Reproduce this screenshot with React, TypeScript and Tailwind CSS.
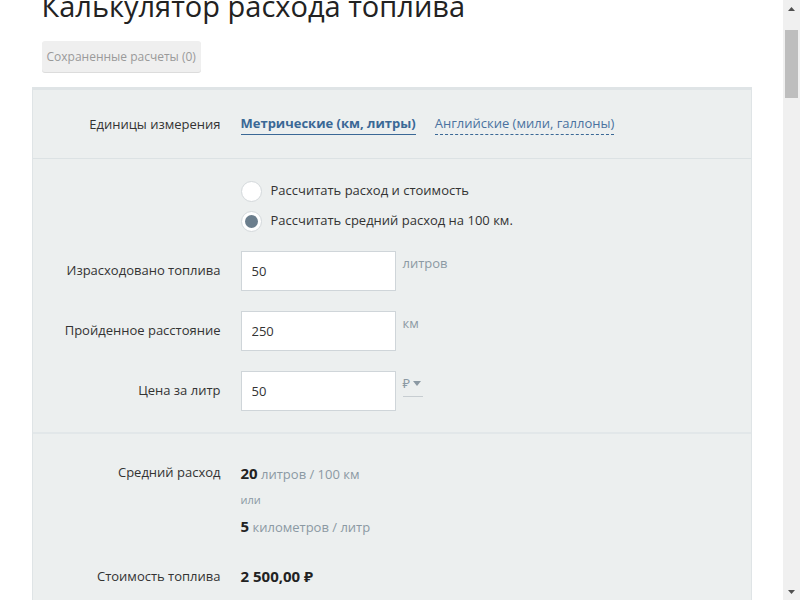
import { useLayoutEffect, useRef } from "react";

const font = { fontFamily: '"Open Sans", "Noto Sans", sans-serif' };

function Label({ children }: { children: React.ReactNode }) {
  return <div className="w-[188px] shrink-0 text-right text-[13px] text-[#333]">{children}</div>;
}

function Radio({ checked, label }: { checked?: boolean; label: string }) {
  return (
    <label className="flex h-[30px] items-center gap-[9px] text-[13px] text-[#333]">
      <span className="flex h-[21px] w-[21px] items-center justify-center rounded-full border border-[#d3d8db] bg-white">
        {checked && <span className="h-[13px] w-[13px] rounded-full bg-[#6b7e8d]" />}
      </span>
      {label}
    </label>
  );
}

function Field({ label, value, unit, currency }: { label: string; value: string; unit?: string; currency?: boolean }) {
  return (
    <div className="flex items-center gap-5">
      <Label>{label}</Label>
      <input
        defaultValue={value}
        className="h-[40px] w-[155px] border border-[#cfd5d9] bg-white px-[10px] text-[13px] text-[#333] outline-none"
      />
      <div className="-ml-[13px] self-start pt-[3px] text-[13px] text-[#8b99a3]">
        {unit}
        {currency && (
          <span className="flex items-center gap-[3px] border-b border-[#c7cdd1] pb-[2px] pr-[2px]">
            ₽
            <svg width="8" height="5" viewBox="0 0 8 5">
              <path d="M0 0h8L4 5z" fill="#8b99a3" />
            </svg>
          </span>
        )}
      </div>
    </div>
  );
}

// the page is scrolled; browser scrollbar is drawn by hand
function Scrollbar() {
  return (
    <div className="flex h-screen w-[17px] shrink-0 flex-col bg-[#f0f0f0]">
      <div className="flex h-[17px] items-center justify-center">
        <svg width="7" height="4" viewBox="0 0 7 4">
          <path d="M0 4h7L3.5 0z" fill="#505050" />
        </svg>
      </div>
      <div className="mx-[2px] mt-[13px] h-[68px] bg-[#bebebe]" />
      <div className="flex-1" />
      <div className="flex h-[17px] items-center justify-center">
        <svg width="7" height="4" viewBox="0 0 7 4">
          <path d="M0 0h7L3.5 4z" fill="#505050" />
        </svg>
      </div>
    </div>
  );
}

export default function App() {
  const scroller = useRef<HTMLDivElement>(null);

  useLayoutEffect(() => {
    if (scroller.current) scroller.current.scrollTop = 100;
  }, []);

  return (
    <div className="flex h-screen bg-white" style={font}>
      <div ref={scroller} className="h-screen flex-1 overflow-hidden">
        <div className="mx-auto w-[720px] pb-[4200px] pt-[88px]">
          <h1 className="px-[10px] text-[29px] leading-[36px] text-[#222]">Калькулятор расхода топлива</h1>
          <button className="ml-[10px] mt-[17px] h-[31px] rounded-[3px] bg-[#efefef] px-[5px] text-[12px] text-[#9a9a9a] shadow-[0_1px_0_#dcdcdc]">
            Сохраненные расчеты (0)
          </button>

          <div className="mt-[15px] border-x border-t-[3px] border-[#dfe4e6] bg-[#ecefef]">
            {/* Units */}
            <div className="flex h-[68px] items-center gap-5 pt-[1px]">
              <Label>Единицы измерения</Label>
              <div className="flex items-center gap-[19px] text-[13px]">
                <span className="border-b border-[#3a6896] pb-[1px] font-bold text-[#3a6896]">Метрические (км, литры)</span>
                <span className="border-b border-dashed border-[#3a6896] pb-[1px] text-[#4a72a0]">Английские (мили, галлоны)</span>
              </div>
            </div>

            {/* Inputs */}
            <div className="flex flex-col gap-5 border-t border-[#dce2e4] pb-[21px] pt-[17px]">
              <div className="-mb-[5px] ml-[208px] flex flex-col">
                <Radio label="Рассчитать расход и стоимость" />
                <Radio checked label="Рассчитать средний расход на 100 км." />
              </div>
              <Field label="Израсходовано топлива" value="50" unit="литров" />
              <Field label="Пройденное расстояние" value="250" unit="км" />
              <Field label="Цена за литр" value="50" currency />
            </div>

            {/* Results */}
            <div className="flex flex-col gap-[25px] border-t-2 border-[#e2e7e9] pb-10 pt-[29px]">
              <div className="flex items-start gap-5">
                <Label>Средний расход</Label>
                <div className="-mt-[3px] flex flex-col text-[13px] text-[#8b99a3]">
                  <div className="leading-[26px]">
                    <b className="text-[15px] text-[#222]">20</b> литров / 100 км
                  </div>
                  <div className="text-[11px] leading-[26px]">или</div>
                  <div className="leading-[26px]">
                    <b className="text-[15px] text-[#222]">5</b> километров / литр
                  </div>
                </div>
              </div>
              <div className="flex items-center gap-5">
                <Label>Стоимость топлива</Label>
                <b className="text-[15px] text-[#222]">2 500,00 ₽</b>
              </div>
            </div>
          </div>
        </div>
      </div>
      <Scrollbar />
    </div>
  );
}
